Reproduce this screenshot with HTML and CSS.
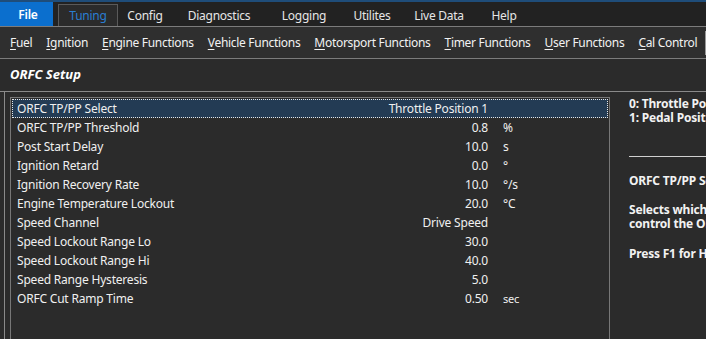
FILE: index.html
```html
<!DOCTYPE html>
<html>
<head>
<meta charset="utf-8">
<link rel="stylesheet" href="styles.css">
</head>
<body>
<div class="app">
  <div class="tabs">
    <div class="file">File</div>
    <div class="tab active">Tuning</div>
    <div class="tab t-config">Config</div>
    <div class="tab t-diag">Diagnostics</div>
    <div class="tab t-log">Logging</div>
    <div class="tab t-util">Utilites</div>
    <div class="tab t-live">Live Data</div>
    <div class="tab t-help">Help</div>
  </div>
  <div class="toolbar">
    <span class="tool"><u>F</u>uel</span>
    <span class="tool"><u>I</u>gnition</span>
    <span class="tool"><u>E</u>ngine Functions</span>
    <span class="tool"><u>V</u>ehicle Functions</span>
    <span class="tool"><u>M</u>otorsport Functions</span>
    <span class="tool"><u>T</u>imer Functions</span>
    <span class="tool"><u>U</u>ser Functions</span>
    <span class="tool"><u>C</u>al Control</span>
    <span class="sep"></span>
  </div>
  <div class="header">ORFC Setup</div>
  <div class="main">
    <div class="list">
      <div class="row selected"><span class="label">ORFC TP/PP Select</span><span class="value">Throttle Position 1</span><span class="unit"></span></div>
      <div class="row"><span class="label">ORFC TP/PP Threshold</span><span class="value">0.8</span><span class="unit">%</span></div>
      <div class="row"><span class="label">Post Start Delay</span><span class="value">10.0</span><span class="unit">s</span></div>
      <div class="row"><span class="label">Ignition Retard</span><span class="value">0.0</span><span class="unit">°</span></div>
      <div class="row"><span class="label">Ignition Recovery Rate</span><span class="value">10.0</span><span class="unit">°/s</span></div>
      <div class="row"><span class="label">Engine Temperature Lockout</span><span class="value">20.0</span><span class="unit">°C</span></div>
      <div class="row"><span class="label">Speed Channel</span><span class="value">Drive Speed</span><span class="unit"></span></div>
      <div class="row"><span class="label">Speed Lockout Range Lo</span><span class="value">30.0</span><span class="unit"></span></div>
      <div class="row"><span class="label">Speed Lockout Range Hi</span><span class="value">40.0</span><span class="unit"></span></div>
      <div class="row"><span class="label">Speed Range Hysteresis</span><span class="value">5.0</span><span class="unit"></span></div>
      <div class="row"><span class="label">ORFC Cut Ramp Time</span><span class="value">0.50</span><span class="unit small">sec</span></div>
    </div>
    <div class="desc">
      <div class="opts">0: Throttle Position 1<br>1: Pedal Position 1</div>
      <div class="rule"></div>
      <div class="para first">ORFC TP/PP Select</div>
      <div class="para">Selects which channel is used to<br>control the ORFC function.</div>
      <div class="para">Press F1 for Help</div>
    </div>
  </div>
</div>
</body>
</html>
```

FILE: styles.css
```css
* { box-sizing: border-box; }
html, body { margin: 0; padding: 0; }
body {
  width: 706px;
  height: 339px;
  overflow: hidden;
  background: #2b2b2b;
  font-family: "Noto Sans", "Open Sans", sans-serif;
  font-size: 12px;
  color: #f0f0f0;
}
.app { display: flex; flex-direction: column; height: 339px; }

.tabs {
  display: flex;
  align-items: flex-end;
  height: 27px;
  background: #222222;
  border-top: 2px solid #1f4d7a;
  border-bottom: 1px solid #7c7c7c;
  letter-spacing: -0.25px;
}
.file {
  width: 53px;
  height: 24px;
  background: #0b6fce;
  color: #ffffff;
  font-weight: 600;
  display: flex;
  align-items: center;
  justify-content: center;
  padding-left: 3px;
}
.tab {
  height: 22px;
  display: flex;
  align-items: center;
  justify-content: center;
  color: #e6e6e6;
}
.tab.active {
  margin-left: 5px;
  width: 60px;
  background: #2b2b2b;
  border: 1px solid #5a5a5a;
  border-bottom: none;
  color: #2a7ed2;
}
.t-config { width: 54px; }
.t-diag { width: 94px; }
.t-log { width: 76px; }
.t-util { width: 60px; }
.t-live { width: 74px; }
.t-help { width: 56px; }

.toolbar {
  display: flex;
  align-items: center;
  gap: 14px;
  height: 32px;
  padding-left: 10px;
  background: #2f2f2f;
  border-bottom: 1px solid #7c7c7c;
  white-space: nowrap;
  letter-spacing: -0.3px;
}
.tool { color: #f2f2f2; }
.tool u { text-underline-offset: 2px; }
.sep {
  width: 1px;
  height: 24px;
  background: #9a9a9a;
  margin-left: -6px;
}

.header {
  height: 33px;
  padding: 0 0 3px 10px;
  display: flex;
  align-items: center;
  font-weight: 700;
  font-style: italic;
  font-size: 13px;
  color: #ffffff;
  border-bottom: 1px solid #8a8a8a;
}

.main {
  flex: 1;
  display: flex;
  margin-left: 4px;
  border-left: 1px solid #8a8a8a;
  padding: 5px 0 0 5px;
}
.list {
  width: 600px;
  border: 1px solid #777777;
  border-bottom: none;
  padding: 1px 0 0 1px;
  letter-spacing: -0.2px;
}
.row {
  height: 19px;
  display: flex;
  align-items: center;
  padding-left: 5px;
  white-space: nowrap;
}
.row.selected {
  background: #233b54;
  outline: 1px dotted #e6e6e6;
  outline-offset: -1px;
  margin-right: 1px;
}
.label { width: 200px; }
.value { width: 271px; text-align: right; }
.unit { margin-left: 15px; }
.unit.small { font-size: 11px; }

.desc {
  flex: 1;
  padding: 0 0 0 19px;
  font-weight: 700;
  white-space: nowrap;
  overflow: hidden;
  line-height: 14px;
  color: #f2f2f2;
  letter-spacing: -0.2px;
}
.rule {
  height: 1px;
  background: #d0d0d0;
  margin: 31px 0 17px 0;
}
.para { margin-bottom: 16px; }
.para.first { margin-bottom: 15px; }
```
